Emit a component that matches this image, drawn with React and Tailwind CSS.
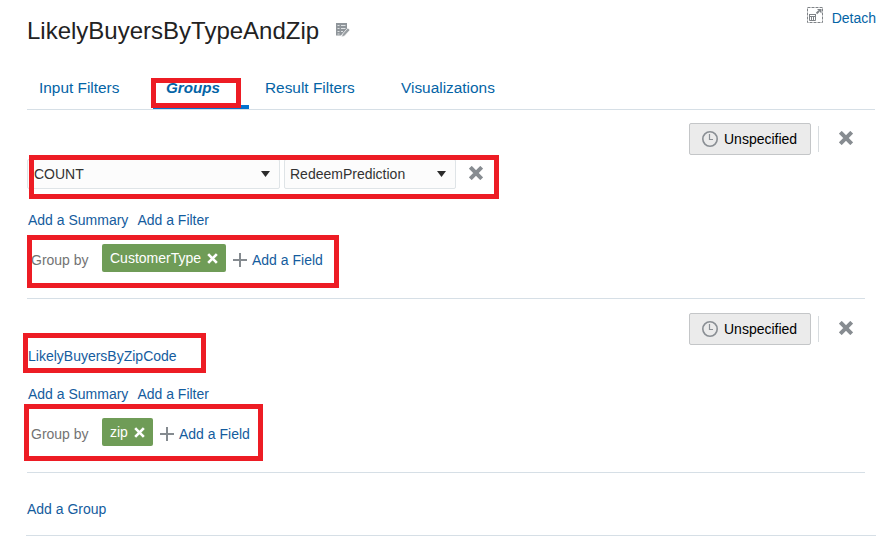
const link = "text-[#145c9e] whitespace-nowrap";

function Cross({ size = 14, color = "#878c91", width = 4 }) {
  return (
    <svg width={size} height={size} viewBox="0 0 14 14" className="block shrink-0" stroke={color} strokeWidth={width} strokeLinecap="square">
      <path d="M2.7 2.7L11.3 11.3M11.3 2.7L2.7 11.3" />
    </svg>
  );
}

function Clock() {
  return (
    <svg width="18" height="18" viewBox="0 0 18 18" className="block shrink-0" fill="none" stroke="#8a8f94">
      <circle cx="9" cy="9" r="7.2" strokeWidth="1.6" />
      <path d="M8.5 4V9.5H12" strokeWidth="1.2" />
    </svg>
  );
}

function EditIcon() {
  return (
    <svg width="14" height="14" viewBox="0 0 14 14" className="block">
      <path d="M0 0H11V6L5 12.5H0Z" fill="#8f959a" />
      <path d="M1.5 2.5H3.5M5 2.5H9.5M1.5 5.5H3.5M5 5.5H9.5M1.5 8.5H3.5M5 8.5H7M1.5 11H3.5" stroke="#dfe2e4" strokeWidth="1" />
      <path d="M5.5 14L6.5 11L11.8 5L14 7L8.5 13Z" fill="#9a9fa3" stroke="#fff" strokeWidth=".6" />
    </svg>
  );
}

function DetachIcon() {
  return (
    <svg width="16" height="16" viewBox="0 0 16 16" className="block" fill="none" stroke="#7f8387">
      <rect x=".5" y=".5" width="15" height="15" strokeDasharray="3 1" />
      <path d="M2 7.5H9M2.5 8V13.5H8.5V8M2.5 9.5H8.5M4.5 10V13M6.5 10V13" />
      <path d="M9.5 6.5L12 4" strokeWidth="1.8" />
      <path d="M10 2H14.5V6.5Z" fill="#7f8387" stroke="none" />
    </svg>
  );
}

function Plus() {
  return (
    <svg width="14" height="14" viewBox="0 0 14 14" className="block shrink-0" stroke="#858b90" strokeWidth="2">
      <path d="M0 7H14M7 0V14" />
    </svg>
  );
}

function Caret() {
  return (
    <svg width="9" height="6" viewBox="0 0 9 6" className="block shrink-0" fill="#2b2b2b">
      <path d="M0 0H9L4.5 6Z" />
    </svg>
  );
}

function Select({ label, className }) {
  return (
    <div className={`flex h-[30px] shrink-0 items-center justify-between rounded-xs border border-[#dfe4e7] bg-[#fcfcfc] pr-[9px] text-[#333] ${className}`}>
      <span className="leading-4">{label}</span>
      <Caret />
    </div>
  );
}

function Toolbar() {
  return (
    <div className="flex h-8 items-center justify-end pr-3">
      <button className="flex h-8 w-[122px] items-center rounded-xs border border-[#c4c6c8] bg-[#ebebeb] pl-[11px] text-black">
        <Clock />
        <span className="ml-[5px] leading-4">Unspecified</span>
      </button>
      <div className="ml-[7px] h-[26px] w-px bg-[#d8dcdf]" />
      <div className="-mt-0.5 ml-5">
        <Cross />
      </div>
    </div>
  );
}

function Actions() {
  return (
    <div className="flex h-4 gap-[9px] leading-4">
      <a className={link}>Add a Summary</a>
      <a className={link}>Add a Filter</a>
    </div>
  );
}

function GroupBy({ field, chip }) {
  return (
    <div className="flex h-8 pl-1">
      <span className="w-[71px] pt-2 leading-4 text-[#737373]">Group by</span>
      <div className={`flex h-7 items-center rounded-xs bg-[#6f9c57] pl-2 text-white ${chip}`}>
        <span className="leading-4">{field}</span>
        <div className="ml-1.5">
          <Cross size={11} color="#fff" width={3.4} />
        </div>
      </div>
      <div className="ml-[7px] pt-[9px]">
        <Plus />
      </div>
      <a className={`ml-[5px] pt-2 leading-4 ${link}`}>Add a Field</a>
    </div>
  );
}

function Mark({ className }) {
  return <div className={`pointer-events-none absolute border-5 border-[#ed1c24] ${className}`} />;
}

export default function App() {
  return (
    <div className="relative h-[540px] w-[885px] overflow-hidden bg-white pl-[27px] font-['Liberation_Sans',Arial,sans-serif] text-sm">
      <header className="flex h-[70px] pr-[9px]">
        <h1 className="h-7 pt-[17px] text-2xl leading-7 text-[#222]">LikelyBuyersByTypeAndZip</h1>
        <div className="ml-[17px] pt-[23px]">
          <EditIcon />
        </div>
        <div className="ml-auto flex gap-[9px] pt-[7px]">
          <DetachIcon />
          <a className="pt-[3px] leading-4 whitespace-nowrap text-[#0464a6]">Detach</a>
        </div>
      </header>
      <nav className="mr-2.5 flex h-10 border-b border-[#d6dfe6] text-[15.4px] leading-5 text-[#0464a6]">
        <a className="w-[126px] pt-2 pl-3">Input Filters</a>
        <a className="h-[39px] w-24 border-b-4 border-[#0572ce] pt-2 pl-[13px] text-[15.2px] font-bold italic">Groups</a>
        <a className="w-[135px] pt-2 pl-4">Result Filters</a>
        <a className="pt-2 pl-[17px]">Visualizations</a>
      </nav>
      <section className="mr-5 h-[189px] border-b border-[#d6dfe6] pt-[13px]">
        <Toolbar />
        <div className="mt-1 flex h-[30px]">
          <Select label="COUNT" className="w-[253px] pl-1.5" />
          <Select label="RedeemPrediction" className="ml-1 w-[172px] pl-[5px]" />
          <div className="mt-[7px] ml-[13px]">
            <Cross />
          </div>
        </div>
        <div className="mt-[23px] pl-px">
          <Actions />
        </div>
        <div className="mt-4">
          <GroupBy field="CustomerType" chip="w-[124px]" />
        </div>
      </section>
      <section className="mr-5 h-[174px] border-b border-[#d6dfe6] pt-3.5">
        <Toolbar />
        <div className="mt-[3px] h-4 pl-px leading-4">
          <a className={link}>LikelyBuyersByZipCode</a>
        </div>
        <div className="mt-[22px] pl-px">
          <Actions />
        </div>
        <div className="mt-4">
          <GroupBy field="zip" chip="w-[51px]" />
        </div>
      </section>
      <footer className="-ml-px mr-[9px] h-[63px] border-b border-[#d6dfe6] pt-7 pl-px leading-4">
        <a className={link}>Add a Group</a>
      </footer>
      <Mark className="top-[78px] left-[151px] h-[30px] w-[90px]" />
      <Mark className="top-[155px] left-[29px] h-11 w-[470px]" />
      <Mark className="top-[235px] left-[27px] h-[53px] w-[312px]" />
      <Mark className="top-[333px] left-[23px] h-10 w-[183px]" />
      <Mark className="top-[404px] left-6 h-[57px] w-[239px]" />
    </div>
  );
}
